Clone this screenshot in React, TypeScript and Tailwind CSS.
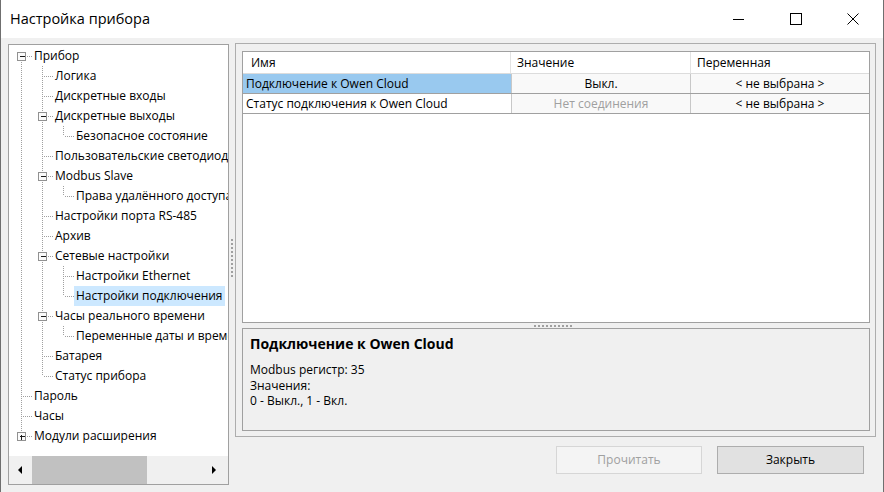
import React from 'react';

type Row = { t: string; l: number; e?: 'minus' | 'plus'; sel?: boolean };

const rows: Row[] = [
    { t: 'Прибор', l: 0, e: 'minus' },
    { t: 'Логика', l: 1 },
    { t: 'Дискретные входы', l: 1 },
    { t: 'Дискретные выходы', l: 1, e: 'minus' },
    { t: 'Безопасное состояние', l: 2 },
    { t: 'Пользовательские светодиоды', l: 1 },
    { t: 'Modbus Slave', l: 1, e: 'minus' },
    { t: 'Права удалённого доступа', l: 2 },
    { t: 'Настройки порта RS-485', l: 1 },
    { t: 'Архив', l: 1 },
    { t: 'Сетевые настройки', l: 1, e: 'minus' },
    { t: 'Настройки Ethernet', l: 2 },
    { t: 'Настройки подключения', l: 2, sel: true },
    { t: 'Часы реального времени', l: 1, e: 'minus' },
    { t: 'Переменные даты и времени', l: 2 },
    { t: 'Батарея', l: 1 },
    { t: 'Статус прибора', l: 1 },
    { t: 'Пароль', l: 0 },
    { t: 'Часы', l: 0 },
    { t: 'Модули расширения', l: 0, e: 'plus' },
];

const hasNext = (i: number) => {
    for (let j = i + 1; j < rows.length; j++) {
        if (rows[j].l < rows[i].l) return false;
        if (rows[j].l === rows[i].l) return true;
    }
    return false;
};

const ancestor = (i: number, c: number) => {
    for (let j = i - 1; j >= 0; j--) if (rows[j].l === c) return j;
    return 0;
};

const font = { fontFamily: '"Open Sans", "Liberation Sans", Arial, sans-serif' };

function TreeLines({ i }: { i: number }) {
    const r = rows[i];
    const w = 23 + 21 * r.l;
    const col = (c: number) => 12 + 21 * c + 0.5;
    const own = col(r.l);
    const dot = { stroke: '#a0a0a0', strokeDasharray: '1 1', shapeRendering: 'crispEdges' as const };
    return (
        <svg width={w} height={20} className="shrink-0">
            {Array.from({ length: r.l }).map((_, c) =>
                hasNext(ancestor(i, c)) ? <line key={c} x1={col(c)} y1={0} x2={col(c)} y2={20} {...dot} /> : null,
            )}
            {i > 0 && <line x1={own} y1={0} x2={own} y2={10} {...dot} />}
            {hasNext(i) && <line x1={own} y1={10} x2={own} y2={20} {...dot} />}
            <line x1={own + 1} y1={10.5} x2={w} y2={10.5} {...dot} />
            {r.e && (
                <g shapeRendering="crispEdges">
                    <rect x={own - 4} y={6.5} width={8} height={8} fill="#fbfbfb" stroke="#919191" />
                    <line x1={own - 2} y1={10.5} x2={own + 3} y2={10.5} stroke="#1a1a1a" />
                    {r.e === 'plus' && <line x1={own} y1={8.5} x2={own} y2={13.5} stroke="#1a1a1a" />}
                </g>
            )}
        </svg>
    );
}

function Dots({ vertical }: { vertical?: boolean }) {
    return (
        <div className={vertical ? 'flex flex-col gap-[2px]' : 'flex gap-[2px]'}>
            {Array.from({ length: 10 }).map((_, k) => (
                <div key={k} className="h-[2px] w-[2px] bg-[#a0a0a0]" />
            ))}
        </div>
    );
}

export default function App() {
    return (
        <div className="flex h-[492px] w-[884px] flex-col overflow-hidden border-x border-[#6f6f6f] bg-[#f0f0f0] text-black" style={font}>
            {/* Title bar */}
            <div className="flex h-[38px] shrink-0 items-center justify-between bg-white">
                <span className="pl-[9px] text-[14.5px]">Настройка прибора</span>
                <div className="flex h-full">
                    <div className="flex w-[58px] items-center justify-center">
                        <svg width="12" height="12"><line x1="1" y1="6.5" x2="12" y2="6.5" stroke="#000" /></svg>
                    </div>
                    <div className="flex w-[58px] items-center justify-center">
                        <svg width="12" height="12"><rect x="0.5" y="0.5" width="11" height="11" fill="none" stroke="#000" /></svg>
                    </div>
                    <div className="flex w-[58px] items-center justify-center pr-[2px]">
                        <svg width="12" height="12"><path d="M0.5 0.5L11.5 11.5M11.5 0.5L0.5 11.5" stroke="#000" /></svg>
                    </div>
                </div>
            </div>

            {/* Body */}
            <div className="flex flex-1 pl-[7px] pt-[5px]">
                {/* Tree panel */}
                <div className="mt-[1px] flex h-[441px] w-[221px] flex-col border border-[#a0a0a0] bg-white">
                    <div className="flex-1 overflow-hidden pt-[1px]">
                        {rows.map((r, i) => (
                            <div key={i} className="flex h-[20px] items-center whitespace-nowrap">
                                <TreeLines i={i} />
                                <span className={`px-[2px] text-[12px] leading-[20px] ${r.sel ? 'bg-[#cce8ff]' : ''}`}>{r.t}</span>
                            </div>
                        ))}
                    </div>
                    <div className="flex h-[28px] items-center bg-[#f0f0f0]">
                        <div className="flex w-[23px] justify-center">
                            <svg width="5" height="8"><path d="M4 0L0 4L4 8Z" fill="#000" /></svg>
                        </div>
                        <div className="h-full w-[115px] bg-[#c1c1c1]" />
                        <div className="flex-1" />
                        <div className="flex w-[28px] justify-center">
                            <svg width="5" height="8"><path d="M0 0L4 4L0 8Z" fill="#000" /></svg>
                        </div>
                    </div>
                </div>

                {/* Vertical splitter */}
                <div className="flex w-[6px] items-center justify-center pb-[20px]">
                    <Dots vertical />
                </div>

                {/* Right column */}
                <div className="flex w-[641px] flex-col">
                    <div className="flex h-[394px] flex-col border border-[#adadad] pb-[5px] pl-[6px] pr-[5px] pt-[7px]">
                        {/* Grid */}
                        <div className="h-[272px] border border-[#a0a0a0] bg-white text-[12px]">
                            <div className="flex h-[22px] border-b border-[#dcdcdc]">
                                <div className="flex w-[268px] items-center border-r border-[#e3e3e3] pl-[8px]">Имя</div>
                                <div className="flex w-[180px] items-center border-r border-[#e3e3e3] pl-[6px]">Значение</div>
                                <div className="flex flex-1 items-center pl-[6px]">Переменная</div>
                            </div>
                            <div className="flex h-[20px] border-b border-[#a0a0a0]">
                                <div className="flex w-[268px] items-center bg-[#99c9ef] pl-[3px]">Подключение к Owen Cloud</div>
                                <div className="flex w-[180px] items-center justify-center border-x border-[#c8c8c8] bg-[#f9f9f9]">Выкл.</div>
                                <div className="flex flex-1 items-center justify-center bg-[#f9f9f9]">&lt; не выбрана &gt;</div>
                            </div>
                            <div className="flex h-[20px] border-b border-[#a0a0a0]">
                                <div className="flex w-[268px] items-center pl-[3px]">Статус подключения к Owen Cloud</div>
                                <div className="flex w-[180px] items-center justify-center border-x border-[#c8c8c8] bg-[#f9f9f9] text-[#a0a0a0]">Нет соединения</div>
                                <div className="flex flex-1 items-center justify-center bg-[#f9f9f9]">&lt; не выбрана &gt;</div>
                            </div>
                        </div>

                        {/* Horizontal splitter */}
                        <div className="flex h-[5px] items-center pl-[292px]">
                            <Dots />
                        </div>

                        {/* Description */}
                        <div className="h-[103px] border border-[#a0a0a0] bg-[#f0f0f0] pl-[7px] pt-[6px]">
                            <div className="text-[14px] font-bold leading-[18px]">Подключение к Owen Cloud</div>
                            <div className="mt-[9px] text-[12px] leading-[15.5px]">
                                <div>Modbus регистр: 35</div>
                                <div>Значения:</div>
                                <div>0 - Выкл., 1 - Вкл.</div>
                            </div>
                        </div>
                    </div>

                    {/* Buttons */}
                    <div className="mt-[9px] flex justify-end gap-[15px] pr-[12px] text-[12px]">
                        <button className="h-[28px] w-[146px] border border-[#d6d6d6] bg-[#f4f4f4] text-[#a0a0a0]">Прочитать</button>
                        <button className="h-[28px] w-[147px] border border-[#adadad] bg-[#e1e1e1]">Закрыть</button>
                    </div>
                </div>
            </div>
        </div>
    );
}
